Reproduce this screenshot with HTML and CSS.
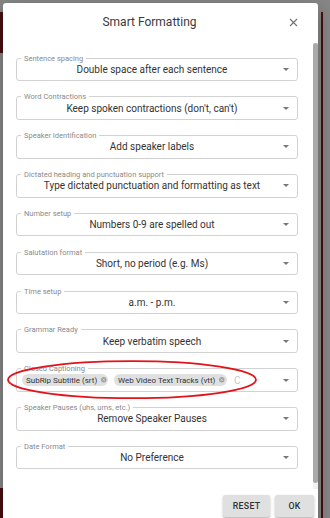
FILE: index.html
```html
<!DOCTYPE html>
<html lang="en">
<head>
    <meta charset="UTF-8">
    <meta name="viewport" content="width=device-width, initial-scale=1.0">
    <title>Smart Formatting</title>
    <link rel="stylesheet" href="styles.css">
</head>
<body>

    <div class="dialog">
        <div class="dialog-header">
            <h2 class="dialog-title">Smart Formatting</h2>
            <svg class="close-icon" width="9" height="9" viewBox="0 0 9 9">
                <path d="M1 1 L8 8 M8 1 L1 8" stroke="#707070" stroke-width="1.1" fill="none"/>
            </svg>
        </div>

        <div class="dialog-body">
            <div class="dialog-content">
                <fieldset class="field">
                    <legend>Sentence spacing</legend>
                    <div class="select"><span class="value">Double space after each sentence</span><span class="arrow"></span></div>
                </fieldset>
                <fieldset class="field">
                    <legend>Word Contractions</legend>
                    <div class="select"><span class="value">Keep spoken contractions (don't, can't)</span><span class="arrow"></span></div>
                </fieldset>
                <fieldset class="field">
                    <legend>Speaker Identification</legend>
                    <div class="select"><span class="value">Add speaker labels</span><span class="arrow"></span></div>
                </fieldset>
                <fieldset class="field">
                    <legend>Dictated heading and punctuation support</legend>
                    <div class="select"><span class="value">Type dictated punctuation and formatting as text</span><span class="arrow"></span></div>
                </fieldset>
                <fieldset class="field">
                    <legend>Number setup</legend>
                    <div class="select"><span class="value">Numbers 0-9 are spelled out</span><span class="arrow"></span></div>
                </fieldset>
                <fieldset class="field">
                    <legend>Salutation format</legend>
                    <div class="select"><span class="value">Short, no period (e.g. Ms)</span><span class="arrow"></span></div>
                </fieldset>
                <fieldset class="field">
                    <legend>Time setup</legend>
                    <div class="select"><span class="value">a.m. - p.m.</span><span class="arrow"></span></div>
                </fieldset>
                <fieldset class="field">
                    <legend>Grammar Ready</legend>
                    <div class="select"><span class="value">Keep verbatim speech</span><span class="arrow"></span></div>
                </fieldset>
                <fieldset class="field field-marked">
                    <legend>Closed Captioning</legend>
                    <div class="select select-chips">
                        <div class="chips">
                            <span class="chip">SubRip Subtitle (srt)<svg class="chip-delete" viewBox="0 0 6 6"><circle cx="3" cy="3" r="3" fill="#a2a2a2"/><path d="M1.8 1.8 L4.2 4.2 M4.2 1.8 L1.8 4.2" stroke="#e0e0e0" stroke-width="0.8"/></svg></span>
                            <span class="chip">Web Video Text Tracks (vtt)<svg class="chip-delete" viewBox="0 0 6 6"><circle cx="3" cy="3" r="3" fill="#a2a2a2"/><path d="M1.8 1.8 L4.2 4.2 M4.2 1.8 L1.8 4.2" stroke="#e0e0e0" stroke-width="0.8"/></svg></span>
                            <span class="chip-input">C</span>
                        </div>
                        <span class="arrow"></span>
                    </div>
                    <svg class="annotation" width="252" height="42" viewBox="0 0 252 42">
                        <ellipse cx="126" cy="20.7" rx="124" ry="18.5" fill="none" stroke="#e3131b" stroke-width="1.8"/>
                    </svg>
                </fieldset>
                <fieldset class="field">
                    <legend>Speaker Pauses (uhs, ums, etc.)</legend>
                    <div class="select"><span class="value">Remove Speaker Pauses</span><span class="arrow"></span></div>
                </fieldset>
                <fieldset class="field">
                    <legend>Date Format</legend>
                    <div class="select"><span class="value">No Preference</span><span class="arrow"></span></div>
                </fieldset>
            </div>
            <div class="scrollbar"><div class="scrollbar-thumb"></div></div>
        </div>

        <div class="dialog-actions">
            <button class="btn">Reset</button>
            <button class="btn">OK</button>
        </div>
    </div>

</body>
</html>
```
FILE: styles.css
```css
:root {
    --backdrop: #878787;
    --maroon: #4a0e10;
    --text: #333333;
    --text-light: #8a8a8a;
    --border: #d2d2d2;
    --chip: #e0e0e0;
}

* {
    box-sizing: border-box;
}

body {
    margin: 0;
    height: 518px;
    overflow: hidden;
    font-family: Roboto, "Liberation Sans", sans-serif;
    background-color: var(--backdrop);
    background-image:
        linear-gradient(var(--maroon), var(--maroon)),
        linear-gradient(var(--maroon), var(--maroon)),
        linear-gradient(var(--maroon), var(--maroon));
    background-size: 3px 41px, 3px 30px, 2px 506px;
    background-position: 0 12px, 0 488px, 321px 12px;
    background-repeat: no-repeat;
}

.dialog {
    margin: 3px 0 0 3px;
    width: 315px;
    height: 540px;
    background: #fff;
    border-radius: 3px 3px 0 0;
    display: flex;
    flex-direction: column;
    box-shadow: 0 6px 20px rgba(0, 0, 0, 0.3);
}

.dialog-header {
    display: flex;
    align-items: center;
    height: 40px;
    padding: 0 20px 2px 15px;
    flex-shrink: 0;
}

.dialog-title {
    flex: 1;
    margin: 0 8px 0 0;
    text-align: center;
    font-size: 12px;
    font-weight: 400;
    color: #3a3a3a;
}

.close-icon {
    display: block;
}

.dialog-body {
    display: flex;
    height: 446px;
    flex-shrink: 0;
}

.dialog-content {
    flex: 1;
    overflow: hidden;
    padding: 10.5px 15px 0 13px;
}

.scrollbar {
    width: 5px;
    background: #f1f1f1;
}

.scrollbar-thumb {
    height: 440px;
    background: #a9a9a9;
    border-radius: 3px;
}

.field {
    margin: 0;
    padding: 0 0 0 4px;
    min-width: 0;
    border: 1px solid var(--border);
    border-radius: 3px;
}

.field + .field {
    margin-top: 11.35px;
}

.field legend {
    padding: 0 3px;
    font-size: 7.5px;
    line-height: 9px;
    color: var(--text-light);
    white-space: nowrap;
}

.select {
    display: flex;
    align-items: center;
    height: 21.5px;
    margin-top: -4px;
    padding-left: 4px;
    font-size: 10px;
    color: var(--text);
}

.value {
    flex: 1;
    text-align: center;
    white-space: nowrap;
}

.arrow {
    width: 0;
    height: 0;
    border-left: 3px solid transparent;
    border-right: 3px solid transparent;
    border-top: 3px solid #777;
    margin: 0 8px 0 4px;
}

.field-marked {
    position: relative;
}

.select-chips {
    padding-left: 0.7px;
}

.chips {
    flex: 1;
    display: flex;
    align-items: center;
}

.chip {
    display: inline-flex;
    align-items: center;
    height: 12.5px;
    padding: 0 1.8px 0 4.3px;
    margin-right: 5.3px;
    border-radius: 6.25px;
    background: var(--chip);
    font-size: 8px;
    color: var(--text);
    white-space: nowrap;
}

.chip-delete {
    width: 5.5px;
    height: 5.5px;
    margin-left: 4px;
}

.chip-input {
    margin-left: 2px;
    font-size: 10px;
    color: #c8c8c8;
}

.annotation {
    position: absolute;
    left: -11px;
    top: -14px;
    pointer-events: none;
}

.dialog-actions {
    display: flex;
    justify-content: flex-end;
    gap: 4.6px;
    padding: 6px 4px 0 0;
}

.btn {
    height: 22px;
    min-width: 39px;
    padding: 0 10px;
    border: none;
    border-radius: 2.5px;
    background: #e0e0e0;
    font-family: Roboto, "Liberation Sans", sans-serif;
    font-size: 8.75px;
    font-weight: 500;
    letter-spacing: 0.3px;
    text-transform: uppercase;
    color: var(--text);
    box-shadow: 0 1px 3px rgba(0, 0, 0, 0.2), 0 1px 1px rgba(0, 0, 0, 0.14);
}
```
